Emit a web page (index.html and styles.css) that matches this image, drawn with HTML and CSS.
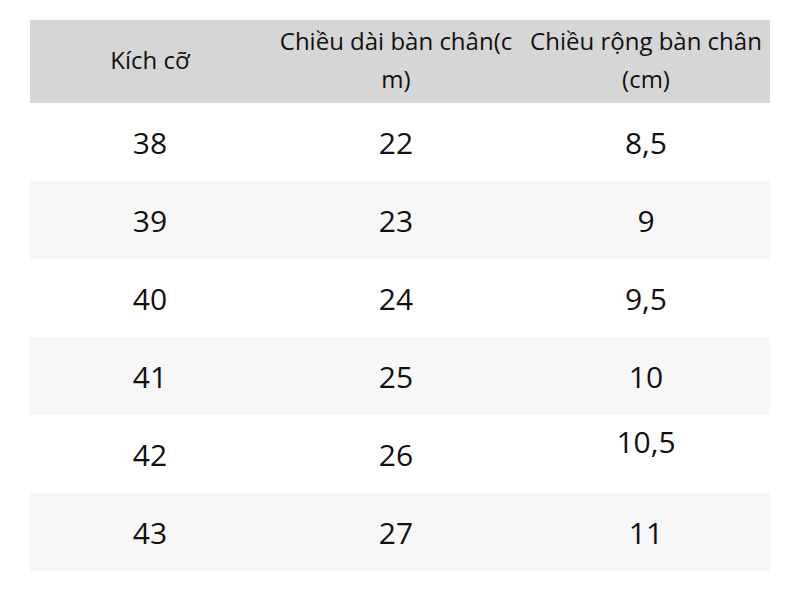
FILE: index.html
```html
<!DOCTYPE html>
<html lang="vi">
<head>
<meta charset="utf-8">
<link rel="stylesheet" href="styles.css">
</head>
<body>
<div class="page">
  <div class="table">
    <div class="row head">
      <div class="cell">Kích cỡ</div>
      <div class="cell wrap">Chiều dài bàn chân(cm)</div>
      <div class="cell">Chiều rộng bàn chân (cm)</div>
    </div>
    <div class="row"><div class="cell">38</div><div class="cell">22</div><div class="cell">8,5</div></div>
    <div class="row alt"><div class="cell">39</div><div class="cell">23</div><div class="cell">9</div></div>
    <div class="row"><div class="cell">40</div><div class="cell">24</div><div class="cell">9,5</div></div>
    <div class="row alt"><div class="cell">41</div><div class="cell">25</div><div class="cell">10</div></div>
    <div class="row"><div class="cell">42</div><div class="cell">26</div><div class="cell raised">10,5</div></div>
    <div class="row alt"><div class="cell">43</div><div class="cell">27</div><div class="cell">11</div></div>
  </div>
</div>
</body>
</html>
```
FILE: styles.css
```css
html, body {
  margin: 0;
  padding: 0;
  background: #ffffff;
}
body {
  font-family: "Open Sans", "Noto Sans", sans-serif;
  color: #111111;
}
.page {
  width: 800px;
  height: 590px;
  padding: 20px 30px 0 30px;
  box-sizing: border-box;
}
.table {
  width: 740px;
}
.row {
  display: grid;
  grid-template-columns: 240px 252px 248px;
  height: 78px;
  align-items: center;
  font-size: 30px;
}
.row.alt {
  background: #f7f7f7;
}
.row.head {
  height: 83px;
  background: #d6d6d6;
  font-size: 24px;
  line-height: 38px;
}
.cell {
  text-align: center;
}
.head .cell {
  padding-bottom: 4px;
}
.head .wrap {
  word-break: break-all;
  padding-left: 3px;
  padding-right: 3px;
}
.raised {
  align-self: start;
  padding-top: 6px;
}
```
